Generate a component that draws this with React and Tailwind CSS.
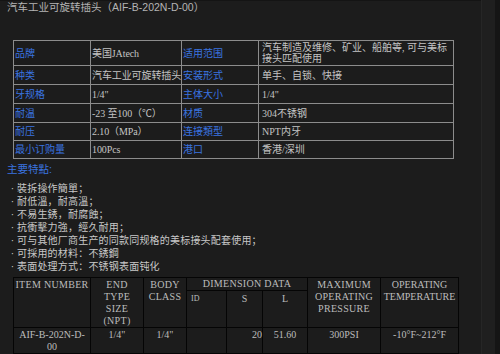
import React from 'react';

const specs = [
  ['品牌', '美国JAtech', '适用范围', '汽车制造及维修、矿业、船舶等, 可与美标接头匹配使用'],
  ['种类', '汽车工业可旋转插头', '安装形式', '单手、自锁、快接'],
  ['牙规格', '1/4"', '主体大小', '1/4"'],
  ['耐温', '-23 至100（℃）', '材质', '304不锈钢'],
  ['耐压', '2.10（MPa）', '连接類型', 'NPT内牙'],
  ['最小订购量', '100Pcs', '港口', '香港/深圳'],
];

const rowHeights = ['h-[25px]', 'h-[19px]', 'h-[19px]', 'h-[19px]', 'h-[18px]', 'h-[18px]'];

const features = [
  '裝拆操作簡單；',
  '耐低溫，耐高溫；',
  '不易生銹，耐腐蝕；',
  '抗衝擊力強，經久耐用；',
  '可与其他厂商生产的同款同规格的美标接头配套使用；',
  '可採用的材料：不銹鋼',
  '表面处理方式：不锈钢表面钝化',
];

const App = () => {
  return (
    <div className="flex h-[354px] w-[500px] overflow-hidden bg-[#1c1c1c] font-['Liberation_Sans','Noto_Sans_CJK_SC',sans-serif]">
      {/* Main content */}
      <div className="w-[481px] border-t border-[#141414]">
        <div className="pl-[7px] text-[10.5px] leading-[13px] text-[#b4b4b4]">
          汽车工业可旋转插头（<span className="font-['Liberation_Sans_Narrow','Liberation_Sans',sans-serif]">AIF-B-202N-D-00</span>）
        </div>

        {/* Spec table */}
        <table className="ml-[13px] mt-[26px] w-[440px] table-fixed border-collapse font-['Liberation_Serif','Noto_Sans_CJK_SC',serif] text-[10px] leading-[11px]">
          <colgroup>
            <col className="w-[77px]" />
            <col className="w-[91px]" />
            <col className="w-[77px]" />
            <col className="w-[195px]" />
          </colgroup>
          <tbody>
            {specs.map((row, i) => (
              <tr key={i} className={rowHeights[i]}>
                <td className="border border-[#8c8c8c] p-0 pl-px text-[#3a74e0]">{row[0]}</td>
                <td className="whitespace-nowrap border border-[#8c8c8c] p-0 pl-px tracking-[-0.1px] text-[#c4c4c4]">{row[1]}</td>
                <td className="border border-[#8c8c8c] p-0 pl-px text-[#3a74e0]">{row[2]}</td>
                <td className="border border-[#8c8c8c] p-0 px-[3px] text-[#c4c4c4]">{row[3]}</td>
              </tr>
            ))}
          </tbody>
        </table>

        {/* Features */}
        <div className="pl-[7px] pt-[2px] text-[10.5px] leading-[16px] text-[#3a74e0]">主要特點:</div>
        <ul className="pl-[8px] pt-[5px] text-[10px] leading-[13px] tracking-[0.2px] text-[#c8c8c8]">
          {features.map((f) => (
            <li key={f} className="flex whitespace-nowrap">
              <span className="w-[9px] text-center">·</span>
              <span>{f}</span>
            </li>
          ))}
        </ul>

        {/* Dimension table */}
        <table className="ml-[13px] mt-[4px] w-[445px] table-fixed border-collapse text-center font-['Liberation_Serif',serif] text-[10px] leading-[12px] text-[#bdbdbd]">
          <colgroup>
            <col className="w-[77px]" />
            <col className="w-[53px]" />
            <col className="w-[43px]" />
            <col className="w-[40px]" />
            <col className="w-[36px]" />
            <col className="w-[45px]" />
            <col className="w-[73px]" />
            <col className="w-[78px]" />
          </colgroup>
          <thead>
            <tr className="h-[12px]">
              <th rowSpan={2} className="border border-[#050505] p-0 pt-[1px] align-top font-normal tracking-[0.3px]">ITEM NUMBER</th>
              <th rowSpan={2} className="border border-[#050505] p-0 pt-[1px] align-top font-normal tracking-[0.3px]">
                END<br />TYPE<br />SIZE<br />(NPT)
              </th>
              <th rowSpan={2} className="border border-[#050505] p-0 pt-[1px] align-top font-normal tracking-[0.3px]">
                BODY<br />CLASS
              </th>
              <th colSpan={3} className="border border-[#050505] p-0 pt-[1px] align-top font-normal leading-[10px] tracking-[0.3px]">DIMENSION DATA</th>
              <th rowSpan={2} className="border border-[#050505] p-0 pt-[1px] align-top font-normal tracking-[0.3px]">
                MAXIMUM<br />OPERATING<br />PRESSURE
              </th>
              <th rowSpan={2} className="border border-[#050505] p-0 pt-[1px] align-top font-normal">
                OPERATING<br />TEMPERATURE
              </th>
            </tr>
            <tr className="h-[35px]">
              <th className="border border-[#050505] p-0 pl-[4px] pt-[2px] text-left align-top text-[8px] font-normal">ID</th>
              <th className="border border-[#050505] p-0 pt-[2px] align-top font-normal">S</th>
              <th className="border border-[#050505] p-0 pt-[2px] align-top font-normal">L</th>
            </tr>
          </thead>
          <tbody>
            <tr className="h-[26px]">
              <td className="border border-[#050505] p-0 px-[4px] pt-px align-top">AIF-B-202N-D-00</td>
              <td className="border border-[#050505] p-0 pt-px align-top">1/4"</td>
              <td className="border border-[#050505] p-0 pt-px align-top">1/4"</td>
              <td className="border border-[#050505] p-0"></td>
              <td className="border border-[#050505] p-0 pt-px text-right align-top">20</td>
              <td className="border border-[#050505] p-0 pt-px align-top">51.60</td>
              <td className="border border-[#050505] p-0 pt-px align-top">300PSI</td>
              <td className="border border-[#050505] p-0 pt-px align-top">-10°F~212°F</td>
            </tr>
          </tbody>
        </table>
      </div>

      {/* Right scroll gutter */}
      <div className="w-[14px] border-l border-[#262626] bg-[#1f1f1f]"></div>
      <div className="flex-1 bg-[#151515]"></div>
    </div>
  );
};

export default App;
